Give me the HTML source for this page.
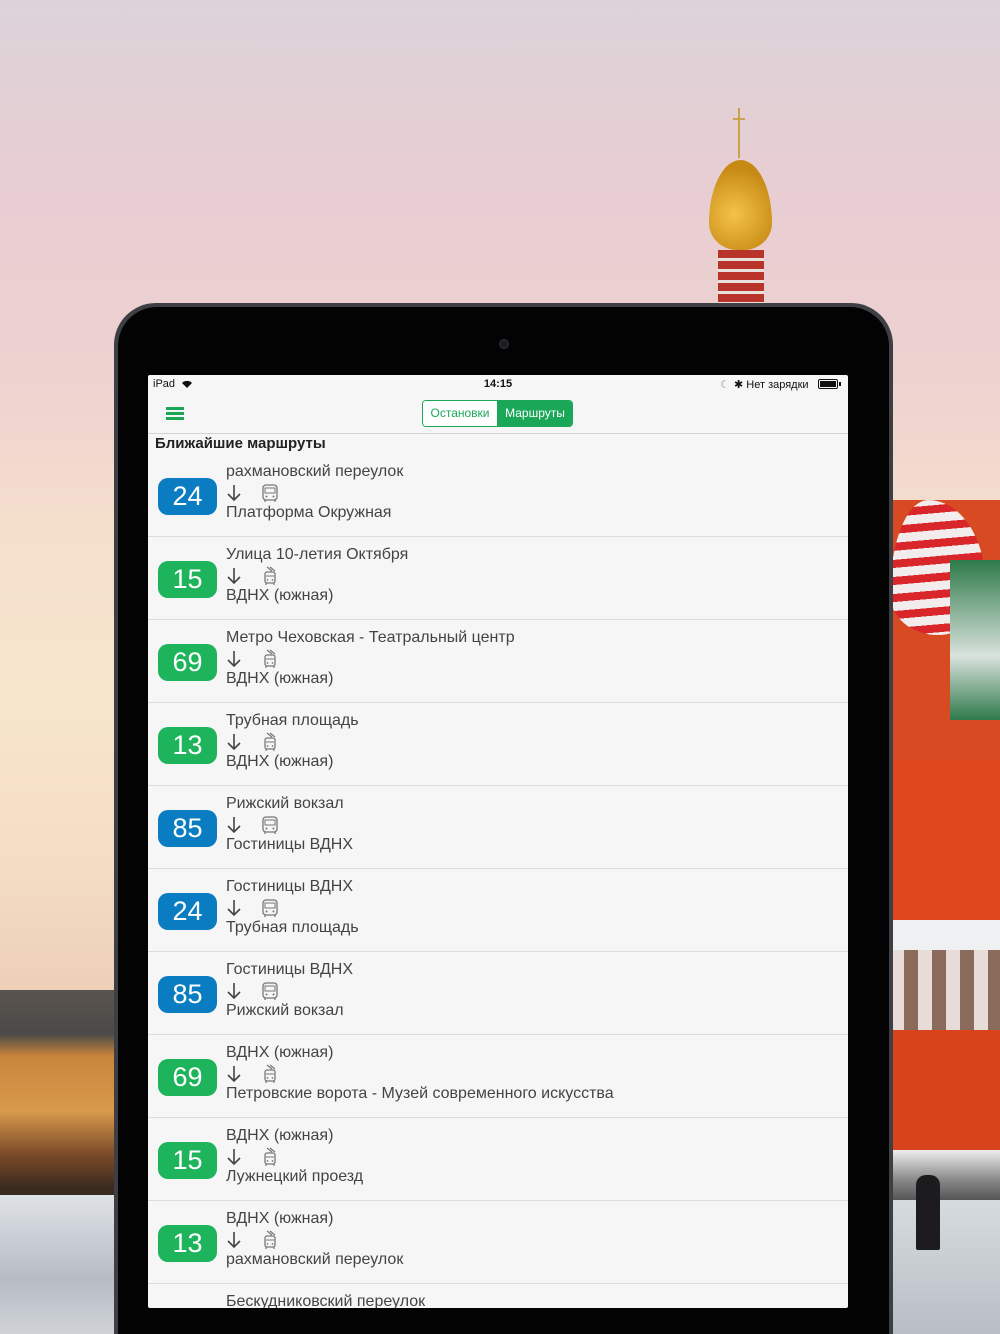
<!DOCTYPE html>
<html><head><meta charset="utf-8">
<style>
*{margin:0;padding:0;box-sizing:border-box}
html{width:1000px;height:1334px;overflow:hidden}
body{width:1000px;height:1334px;overflow:hidden;position:relative;font-family:"Liberation Sans",sans-serif;
background:linear-gradient(180deg,#dcd3d9 0%,#e8cdd2 15%,#eed2d0 28%,#f4dfcc 40%,#f7e6cc 52%,#f4dcc4 65%,#ecceb6 75%,#e4c3ac 100%)}
.abs{position:absolute}
.screen{position:absolute;left:148px;top:375px;width:700px;height:933px;background:#f6f6f6;overflow:hidden;border-radius:2px}
.row{position:absolute;left:0;width:700px;height:83px;border-bottom:1px solid #dcdcdc}
.badge{position:absolute;left:10px;top:24px;width:59px;height:37px;border-radius:10px;color:#fff;font-size:27px;text-align:center;line-height:37px}
.b{background:#0a7dc2}.g{background:#1db45c}
.t1,.t2{position:absolute;left:78px;font-size:16px;color:#444;white-space:nowrap}
.t1{top:9px}.t2{top:50px}
.ar{position:absolute;left:79px;top:30px}
.ic{position:absolute;left:113px;top:29px}
</style></head><body>
<div class="abs" style="left:0;top:990px;width:120px;height:220px;background:linear-gradient(180deg,#5a5450 0%,#4b4a48 20%,#c8843c 30%,#d99a4c 55%,#7a4a28 75%,#3a2a20 90%)"></div>
<div class="abs" style="left:0;top:1195px;width:120px;height:139px;background:linear-gradient(180deg,#dfe3e8,#b7bcc3 60%,#cfd3d8)"></div>
<div class="abs" style="left:738px;top:108px;width:2px;height:50px;background:#c9a24a"></div>
<div class="abs" style="left:733px;top:118px;width:12px;height:2px;background:#c9a24a"></div>
<div class="abs" style="left:709px;top:160px;width:63px;height:90px;border-radius:50% 50% 45% 45%/70% 70% 30% 30%;background:radial-gradient(circle at 40% 60%,#f5c24a,#c68a14 70%)"></div>
<div class="abs" style="left:718px;top:250px;width:46px;height:55px;background:repeating-linear-gradient(180deg,#b8342a 0 8px,#e8e0dc 8px 11px)"></div>
<div class="abs" style="left:890px;top:500px;width:110px;height:834px;background:#d84a22"></div>
<div class="abs" style="left:890px;top:500px;width:95px;height:135px;border-radius:40% 60% 50% 50%/70% 60% 30% 30%;background:repeating-linear-gradient(175deg,#f3ecec 0 9px,#d9262a 9px 17px)"></div>
<div class="abs" style="left:950px;top:560px;width:50px;height:160px;background:linear-gradient(180deg,#2e7a4a,#d9e2dc 60%,#2e7a4a)"></div>
<div class="abs" style="left:890px;top:760px;width:110px;height:160px;background:#e0461c"></div>
<div class="abs" style="left:890px;top:920px;width:110px;height:30px;background:#eef0f2"></div>
<div class="abs" style="left:890px;top:950px;width:110px;height:80px;background:repeating-linear-gradient(90deg,#e7dcd8 0 14px,#8a6a5a 14px 28px)"></div>
<div class="abs" style="left:890px;top:1030px;width:110px;height:120px;background:#d8431c"></div>
<div class="abs" style="left:890px;top:1150px;width:110px;height:50px;background:linear-gradient(180deg,#eee,#888 60%,#555)"></div>
<div class="abs" style="left:890px;top:1200px;width:110px;height:134px;background:linear-gradient(180deg,#d6dbe0,#b9bec4)"></div>
<div class="abs" style="left:916px;top:1175px;width:24px;height:75px;background:#1c1c1e;border-radius:10px 10px 2px 2px"></div>
<div class="abs" style="left:114px;top:303px;width:779px;height:1031px;border-radius:42px 42px 0 0;background:#3d3f44"></div>
<div class="abs" style="left:118px;top:307px;width:771px;height:1027px;border-radius:39px 39px 0 0;background:#030303"></div>
<div class="abs" style="left:499px;top:339px;width:10px;height:10px;border-radius:50%;background:#1b1d24;border:1px solid #333"></div>
<div class="screen">
  <div class="abs" style="left:5px;top:3px;font-size:11px;color:#111">iPad</div>
  <svg class="abs" style="left:32px;top:3px" width="14" height="11" viewBox="0 0 14 11"><path d="M7 10 L2 5 A7 7 0 0 1 12 5 Z" fill="#111"/></svg>
  <div class="abs" style="left:0;top:3px;width:700px;text-align:center;font-size:11px;font-weight:bold;color:#111">14:15</div>
  <div class="abs" style="left:572px;top:3px;font-size:11px;color:#999">☾</div>
  <div class="abs" style="left:586px;top:3px;font-size:11px;color:#111">✱ Нет зарядки</div>
  <div class="abs" style="left:670px;top:4px;width:20px;height:10px;border:1px solid #111;border-radius:2px;padding:1px"><div style="width:100%;height:100%;background:#111"></div></div>
  <div class="abs" style="left:691px;top:7px;width:2px;height:4px;background:#111"></div>
  <div class="abs" style="left:18px;top:32px;width:18px;height:3px;background:#1aa858"></div>
  <div class="abs" style="left:18px;top:37px;width:18px;height:3px;background:#1aa858"></div>
  <div class="abs" style="left:18px;top:42px;width:18px;height:3px;background:#1aa858"></div>
  <div class="abs" style="left:274px;top:25px;width:151px;height:27px;border:1px solid #1aa858;border-radius:4px;overflow:hidden;font-size:12px;line-height:25px">
    <div class="abs" style="left:0;top:0;width:74px;height:25px;background:#fff;color:#1aa858;text-align:center">Остановки</div>
    <div class="abs" style="left:74px;top:0;width:76px;height:25px;background:#1aa858;color:#fff;text-align:center">Маршруты</div>
  </div>
  <div class="abs" style="left:0;top:58px;width:700px;height:1px;background:#d4d4d4"></div>
  <div class="abs" style="left:7px;top:60px;font-size:15px;font-weight:bold;color:#222">Ближайшие маршруты</div>
  <div id="rows"></div>
</div>
<script>
var d=[["b","24","рахмановский переулок","Платформа Окружная"],["g","15","Улица 10-летия Октября","ВДНХ (южная)"],["g","69","Метро Чеховская - Театральный центр","ВДНХ (южная)"],["g","13","Трубная площадь","ВДНХ (южная)"],["b","85","Рижский вокзал","Гостиницы ВДНХ"],["b","24","Гостиницы ВДНХ","Трубная площадь"],["b","85","Гостиницы ВДНХ","Рижский вокзал"],["g","69","ВДНХ (южная)","Петровские ворота - Музей современного искусства"],["g","15","ВДНХ (южная)","Лужнецкий проезд"],["g","13","ВДНХ (южная)","рахмановский переулок"],["g","","Бескудниковский переулок",""]];
var ar='<svg width="14" height="18" viewBox="0 0 14 18"><path d="M7 1V16M1 10L7 16L13 10" fill="none" stroke="#444" stroke-width="1.6"/></svg>';
var bus='<svg width="18" height="20" viewBox="0 0 18 20"><rect x="2" y="2" width="14" height="15" rx="3" fill="none" stroke="#777" stroke-width="1.3"/><rect x="4" y="5" width="10" height="5" fill="none" stroke="#777"/><circle cx="5.5" cy="13.5" r="1" fill="#777"/><circle cx="12.5" cy="13.5" r="1" fill="#777"/><path d="M4 17v2M14 17v2" stroke="#777" stroke-width="1.3"/></svg>';
var tr='<svg width="18" height="20" viewBox="0 0 18 20"><path d="M6 1l5 4M9 1l5 4" stroke="#777" stroke-width="1.2"/><rect x="4" y="6" width="10" height="11" rx="2" fill="none" stroke="#777" stroke-width="1.3"/><path d="M5 10h8" stroke="#777"/><circle cx="6.5" cy="14" r="0.9" fill="#777"/><circle cx="11.5" cy="14" r="0.9" fill="#777"/><path d="M5 17v2M13 17v2" stroke="#777" stroke-width="1.2"/></svg>';
var h='';
d.forEach(function(r,i){
 h+='<div class="row" style="top:'+(79+83*i)+'px"><div class="badge '+r[0]+'">'+r[1]+'</div><div class="t1">'+r[2]+'</div><div class="ar">'+ar+'</div><div class="ic">'+(r[0]=="b"?bus:tr)+'</div><div class="t2">'+r[3]+'</div></div>';
});
document.getElementById('rows').innerHTML=h;
</script>
</body></html>
